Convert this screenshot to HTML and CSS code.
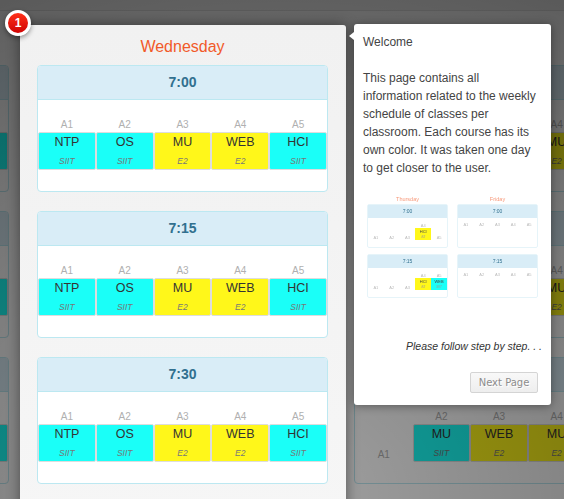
FILE: index.html
```html
<!DOCTYPE html>
<html>
<head>
<meta name="viewport" content="width=device-width, initial-scale=1">
<link rel="stylesheet" href="styles.css">
</head>
<body>

<div class="topbar"></div>

<div class="page">

  <!-- previous day, mostly off screen -->
  <div class="day">
    <h2 class="day-title">Tuesday</h2>
    <div class="slot">
      <div class="slot-head">7:00</div>
      <div class="rooms">
        <div class="room"><span class="room-name">A1</span><div class="course cyan"><b>NTP</b><i>SIIT</i></div></div>
        <div class="room"><span class="room-name">A2</span><div class="course cyan"><b>OS</b><i>SIIT</i></div></div>
        <div class="room"><span class="room-name">A3</span><div class="course yellow"><b>MU</b><i>E2</i></div></div>
        <div class="room"><span class="room-name">A4</span><div class="course yellow"><b>WEB</b><i>E2</i></div></div>
        <div class="room"><span class="room-name">A5</span><div class="course cyan"><b>HCI</b><i>SIIT</i></div></div>
      </div>
    </div>
    <div class="slot">
      <div class="slot-head">7:15</div>
      <div class="rooms">
        <div class="room"><span class="room-name">A1</span><div class="course cyan"><b>NTP</b><i>SIIT</i></div></div>
        <div class="room"><span class="room-name">A2</span><div class="course cyan"><b>OS</b><i>SIIT</i></div></div>
        <div class="room"><span class="room-name">A3</span><div class="course yellow"><b>MU</b><i>E2</i></div></div>
        <div class="room"><span class="room-name">A4</span><div class="course yellow"><b>WEB</b><i>E2</i></div></div>
        <div class="room"><span class="room-name">A5</span><div class="course cyan"><b>HCI</b><i>SIIT</i></div></div>
      </div>
    </div>
    <div class="slot">
      <div class="slot-head">7:30</div>
      <div class="rooms">
        <div class="room"><span class="room-name">A1</span><div class="course cyan"><b>NTP</b><i>SIIT</i></div></div>
        <div class="room"><span class="room-name">A2</span><div class="course cyan"><b>OS</b><i>SIIT</i></div></div>
        <div class="room"><span class="room-name">A3</span><div class="course yellow"><b>MU</b><i>E2</i></div></div>
        <div class="room"><span class="room-name">A4</span><div class="course yellow"><b>WEB</b><i>E2</i></div></div>
        <div class="room"><span class="room-name">A5</span><div class="course cyan"><b>HCI</b><i>SIIT</i></div></div>
      </div>
    </div>
  </div>

  <!-- highlighted day -->
  <div class="day day-focus">
    <span class="step-badge">1</span>
    <h2 class="day-title">Wednesday</h2>
    <div class="slot">
      <div class="slot-head">7:00</div>
      <div class="rooms">
        <div class="room"><span class="room-name">A1</span><div class="course cyan"><b>NTP</b><i>SIIT</i></div></div>
        <div class="room"><span class="room-name">A2</span><div class="course cyan"><b>OS</b><i>SIIT</i></div></div>
        <div class="room"><span class="room-name">A3</span><div class="course yellow"><b>MU</b><i>E2</i></div></div>
        <div class="room"><span class="room-name">A4</span><div class="course yellow"><b>WEB</b><i>E2</i></div></div>
        <div class="room"><span class="room-name">A5</span><div class="course cyan"><b>HCI</b><i>SIIT</i></div></div>
      </div>
    </div>
    <div class="slot">
      <div class="slot-head">7:15</div>
      <div class="rooms">
        <div class="room"><span class="room-name">A1</span><div class="course cyan"><b>NTP</b><i>SIIT</i></div></div>
        <div class="room"><span class="room-name">A2</span><div class="course cyan"><b>OS</b><i>SIIT</i></div></div>
        <div class="room"><span class="room-name">A3</span><div class="course yellow"><b>MU</b><i>E2</i></div></div>
        <div class="room"><span class="room-name">A4</span><div class="course yellow"><b>WEB</b><i>E2</i></div></div>
        <div class="room"><span class="room-name">A5</span><div class="course cyan"><b>HCI</b><i>SIIT</i></div></div>
      </div>
    </div>
    <div class="slot">
      <div class="slot-head">7:30</div>
      <div class="rooms">
        <div class="room"><span class="room-name">A1</span><div class="course cyan"><b>NTP</b><i>SIIT</i></div></div>
        <div class="room"><span class="room-name">A2</span><div class="course cyan"><b>OS</b><i>SIIT</i></div></div>
        <div class="room"><span class="room-name">A3</span><div class="course yellow"><b>MU</b><i>E2</i></div></div>
        <div class="room"><span class="room-name">A4</span><div class="course yellow"><b>WEB</b><i>E2</i></div></div>
        <div class="room"><span class="room-name">A5</span><div class="course cyan"><b>HCI</b><i>SIIT</i></div></div>
      </div>
    </div>
  </div>

  <!-- next day, behind the tooltip -->
  <div class="day">
    <h2 class="day-title">Thursday</h2>
    <div class="slot">
      <div class="slot-head">7:00</div>
      <div class="rooms">
        <div class="room"><span class="room-name">A1</span></div>
        <div class="room"><span class="room-name">A2</span><div class="course cyan"><b>MU</b><i>SIIT</i></div></div>
        <div class="room"><span class="room-name">A3</span><div class="course yellow"><b>WEB</b><i>E2</i></div></div>
        <div class="room"><span class="room-name">A4</span><div class="course yellow"><b>MU</b><i>E2</i></div></div>
        <div class="room"><span class="room-name">A5</span></div>
      </div>
    </div>
    <div class="slot">
      <div class="slot-head">7:15</div>
      <div class="rooms">
        <div class="room"><span class="room-name">A1</span></div>
        <div class="room"><span class="room-name">A2</span><div class="course cyan"><b>MU</b><i>SIIT</i></div></div>
        <div class="room"><span class="room-name">A3</span><div class="course yellow"><b>WEB</b><i>E2</i></div></div>
        <div class="room"><span class="room-name">A4</span><div class="course yellow"><b>MU</b><i>E2</i></div></div>
        <div class="room"><span class="room-name">A5</span></div>
      </div>
    </div>
    <div class="slot">
      <div class="slot-head">7:30</div>
      <div class="rooms">
        <div class="room"><span class="room-name">A1</span></div>
        <div class="room"><span class="room-name">A2</span><div class="course cyan"><b>MU</b><i>SIIT</i></div></div>
        <div class="room"><span class="room-name">A3</span><div class="course yellow"><b>WEB</b><i>E2</i></div></div>
        <div class="room"><span class="room-name">A4</span><div class="course yellow"><b>MU</b><i>E2</i></div></div>
        <div class="room"><span class="room-name">A5</span></div>
      </div>
    </div>
  </div>

</div>

<div class="overlay"></div>

<div class="tip">
  <span class="tip-arrow"></span>
  <p class="tip-text">Welcome</p>
  <p class="tip-text">This page contains all information related to the weekly schedule of classes per classroom. Each course has its own color. It was taken one day to get closer to the user.</p>

  <!-- small preview of two other days -->
  <div class="preview">
    <div class="mini-day">
      <div class="mini-title">Thursday</div>
      <div class="mini-slot">
        <div class="mini-head">7:00</div>
        <div class="mini-rooms">
          <div class="mini-room">A1</div>
          <div class="mini-room">A2</div>
          <div class="mini-room">A3</div>
          <div class="mini-room">A4<div class="mini-course yellow"><b>HCI</b><i>E2</i></div></div>
          <div class="mini-room">A5</div>
        </div>
      </div>
      <div class="mini-slot">
        <div class="mini-head">7:15</div>
        <div class="mini-rooms">
          <div class="mini-room">A1</div>
          <div class="mini-room">A2</div>
          <div class="mini-room">A3</div>
          <div class="mini-room">A4<div class="mini-course yellow"><b>HCI</b><i>E2</i></div></div>
          <div class="mini-room">A5<div class="mini-course cyan"><b>WEB</b><i>SIIT</i></div></div>
        </div>
      </div>
    </div>
    <div class="mini-day">
      <div class="mini-title">Friday</div>
      <div class="mini-slot">
        <div class="mini-head">7:00</div>
        <div class="mini-rooms mini-empty">
          <div class="mini-room">A1</div>
          <div class="mini-room">A2</div>
          <div class="mini-room">A3</div>
          <div class="mini-room">A4</div>
          <div class="mini-room">A5</div>
        </div>
      </div>
      <div class="mini-slot">
        <div class="mini-head">7:15</div>
        <div class="mini-rooms mini-empty">
          <div class="mini-room">A1</div>
          <div class="mini-room">A2</div>
          <div class="mini-room">A3</div>
          <div class="mini-room">A4</div>
          <div class="mini-room">A5</div>
        </div>
      </div>
    </div>
  </div>

  <p class="tip-note">Please follow step by step. . .</p>
  <div class="tip-buttons">
    <span class="next-btn">Next Page</span>
  </div>
</div>

</body>
</html>
```

FILE: styles.css
```css
* {
  box-sizing: border-box;
  font-family: "Liberation Sans", Arial, sans-serif;
}

html, body {
  height: 499px;
  margin: 0;
  overflow: hidden;
}

body {
  background: #fff;
}

.topbar {
  height: 11px;
  border-bottom: 1px solid #e4e4e4;
  background: #f4f4f4;
}

/* Three day columns, the outer two run off the window */
.page {
  display: flex;
  margin: 14px 0 0 -281px;
}

.day {
  flex: none;
  width: 290px;
}

.day-title {
  height: 40px;
  margin: 0;
  color: #f15a29;
  font-size: 16px;
  font-weight: normal;
  line-height: 44px;
  text-align: center;
}

.day-focus {
  position: relative;
  z-index: 11;
  width: 326px;
  height: 500px;
  margin: 0 8px 0 11px;
  padding: 0 18px 0 17px;
  border-radius: 3px 3px 0 0;
  background: linear-gradient(#f1f1f1, #f6f6f6);
  box-shadow: 0 0 14px rgba(0, 0, 0, 0.45);
}

/* Schedule card for one time slot */
.slot {
  height: 127px;
  margin-bottom: 19px;
  border: 1px solid #bce8f1;
  border-radius: 4px;
  background: #fff;
}

.slot-head {
  height: 34px;
  border-bottom: 1px solid #bce8f1;
  border-radius: 3px 3px 0 0;
  background: #d9edf7;
  color: #31708f;
  font-size: 14px;
  font-weight: bold;
  line-height: 33px;
  text-align: center;
}

.rooms {
  display: grid;
  grid-template-columns: repeat(5, 1fr);
  align-items: end;
  height: 70px;
}

.room {
  text-align: center;
}

.room-name {
  display: block;
  height: 14px;
  color: #b0b0b0;
  font-size: 10px;
  line-height: 14px;
}

.course {
  height: 38px;
  border: 1px solid #ddd;
  border-radius: 2px;
}

.course b {
  display: block;
  color: #333;
  font-size: 12.5px;
  font-weight: normal;
  line-height: 18px;
}

.course i {
  display: block;
  color: #777;
  font-size: 8.5px;
  line-height: 20px;
}

.cyan {
  background: #1afff8;
}

.yellow {
  background: #fff71a;
}

/* Dimmed layer over the page */
.overlay {
  position: absolute;
  top: 0;
  left: 0;
  z-index: 10;
  width: 100%;
  height: 100%;
  background: radial-gradient(ellipse 700px 560px at 50% 100%, rgba(0, 0, 0, 0.37), rgba(0, 0, 0, 0.64));
}

.step-badge {
  position: absolute;
  top: -15px;
  left: -15px;
  width: 26px;
  height: 26px;
  border: 3px solid #fff;
  border-radius: 50%;
  background: linear-gradient(#ff3019, #cf0404);
  box-shadow: 0 2px 5px rgba(0, 0, 0, 0.4);
  color: #fff;
  font-size: 12px;
  font-weight: bold;
  line-height: 20px;
  text-align: center;
}

.tip {
  position: absolute;
  top: 24px;
  left: 354px;
  z-index: 12;
  width: 197px;
  height: 381px;
  padding: 9px 9px 8px;
  border-radius: 3px;
  background: #fff;
  box-shadow: 0 1px 10px rgba(0, 0, 0, 0.4);
}

.tip-arrow {
  position: absolute;
  top: 8px;
  left: -5px;
  border-top: 4px solid transparent;
  border-bottom: 4px solid transparent;
  border-right: 5px solid #fff;
}

.tip-text {
  margin: 0 0 18px;
  padding-right: 2px;
  color: #444;
  font-size: 12px;
  line-height: 18px;
}

.tip-note {
  margin: 33px 0 0;
  color: #333;
  font-size: 10.5px;
  font-style: italic;
  line-height: 18px;
  text-align: right;
}

.tip-buttons {
  display: flex;
  justify-content: flex-end;
  margin: 17px 4px 0 0;
}

.next-btn {
  width: 68px;
  height: 21px;
  border: 1px solid #d4d4d4;
  border-radius: 2px;
  background: linear-gradient(#f8f8f8, #eee);
  color: #8c8c8c;
  font-family: "DejaVu Sans", sans-serif;
  font-size: 10px;
  line-height: 19px;
  text-align: center;
  text-shadow: 1px 1px 0 #fff;
}

/* Preview of other days inside the tip */
.preview {
  display: grid;
  grid-template-columns: 81px 81px;
  column-gap: 9px;
  margin: 12px 0 0 4px;
  filter: blur(0.35px);
}

.mini-title {
  height: 9px;
  color: #f79a7c;
  font-size: 5.5px;
  line-height: 8px;
  text-align: center;
}

.mini-slot {
  height: 44px;
  margin-bottom: 6px;
  border: 1px solid #e6f4f9;
  border-radius: 2px;
}

.mini-head {
  height: 13px;
  background: #d9edf7;
  color: #31708f;
  font-size: 5px;
  line-height: 13px;
  text-align: center;
}

.mini-rooms {
  display: grid;
  grid-template-columns: repeat(5, 1fr);
  align-items: end;
  height: 22px;
}

.mini-empty {
  align-items: start;
  height: auto;
  padding-top: 4px;
}

.mini-room {
  color: #bbb;
  font-size: 4px;
  line-height: 5px;
  text-align: center;
}

.mini-course {
  height: 12px;
}

.mini-course b {
  display: block;
  color: #444;
  font-size: 4px;
  font-weight: normal;
  line-height: 7px;
}

.mini-course i {
  display: block;
  color: #999;
  font-size: 3px;
  line-height: 4px;
}
```
